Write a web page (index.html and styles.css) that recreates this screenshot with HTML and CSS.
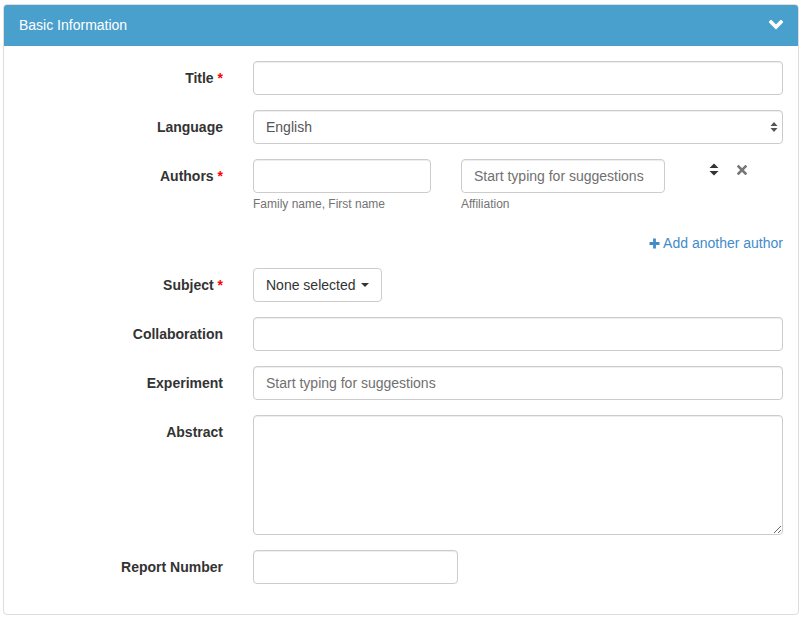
FILE: index.html
```html
<!DOCTYPE html>
<html lang="en">
<head>
<meta charset="utf-8">
<title>Basic Information</title>
<link rel="stylesheet" href="styles.css">
</head>
<body>
<div class="page">
  <div class="panel">
    <div class="panel-heading">
      <span class="panel-title">Basic Information</span>
      <svg class="chevron" width="14" height="10" viewBox="0 0 14 10"><polyline points="2,2 7,7 12,2" fill="none" stroke="#fff" stroke-width="3.6" stroke-linecap="square" stroke-linejoin="miter"/></svg>
    </div>
    <form class="panel-body">
      <div class="form-group">
        <label class="col-label">Title <span class="req">*</span></label>
        <div class="col-control"><input class="form-control" type="text"></div>
      </div>
      <div class="form-group">
        <label class="col-label">Language</label>
        <div class="col-control">
          <div class="select-wrap">
            <select class="form-control select"><option>English</option></select>
            <svg class="select-arrows" width="8" height="12" viewBox="0 0 8 12"><path d="M4 1 L7.5 5 H0.5 Z M4 11 L7.5 7 H0.5 Z" fill="#555"/></svg>
          </div>
        </div>
      </div>
      <div class="form-group">
        <label class="col-label">Authors <span class="req">*</span></label>
        <div class="col-control">
          <div class="author-row">
            <div class="author-name">
              <input class="form-control" type="text">
              <span class="help">Family name, First name</span>
            </div>
            <div class="author-aff">
              <input class="form-control" type="text" placeholder="Start typing for suggestions">
              <span class="help">Affiliation</span>
            </div>
            <div class="author-actions">
              <svg width="10" height="13" viewBox="0 0 10 13"><path d="M5 0.5 L9.5 5 H0.5 Z M5 12.5 L9.5 8 H0.5 Z" fill="#333"/></svg>
              <svg width="10" height="10" viewBox="0 0 10 10"><path d="M1.5 1.5 L8.5 8.5 M8.5 1.5 L1.5 8.5" stroke="#777" stroke-width="2.6" stroke-linecap="square"/></svg>
            </div>
          </div>
          <div class="add-author">
            <a class="link" href="#"><svg width="11" height="11" viewBox="0 0 11 11"><path d="M5.5 0.5 V10.5 M0.5 5.5 H10.5" stroke="#428bca" stroke-width="2.8"/></svg> Add another author</a>
          </div>
        </div>
      </div>
      <div class="form-group">
        <label class="col-label">Subject <span class="req">*</span></label>
        <div class="col-control">
          <button type="button" class="btn">None selected <span class="caret"></span></button>
        </div>
      </div>
      <div class="form-group">
        <label class="col-label">Collaboration</label>
        <div class="col-control"><input class="form-control" type="text"></div>
      </div>
      <div class="form-group">
        <label class="col-label">Experiment</label>
        <div class="col-control"><input class="form-control" type="text" placeholder="Start typing for suggestions"></div>
      </div>
      <div class="form-group">
        <label class="col-label">Abstract</label>
        <div class="col-control"><textarea class="form-control textarea"></textarea></div>
      </div>
      <div class="form-group">
        <label class="col-label">Report Number</label>
        <div class="col-control"><input class="form-control report" type="text"></div>
      </div>
    </form>
  </div>
</div>
</body>
</html>
```

FILE: styles.css
```css
* { box-sizing: border-box; }
html, body { margin: 0; padding: 0; background: #fff; }
body {
  font-family: "Liberation Sans", Arial, Helvetica, sans-serif;
  font-size: 14px;
  line-height: 20px;
  color: #333;
}
.page { padding: 4px 1px 4px 3px; }
.panel {
  width: 796px;
  border: 1px solid #dddddd;
  border-radius: 4px;
  background: #fff;
  overflow: hidden;
}
.panel-heading {
  display: flex;
  align-items: center;
  justify-content: space-between;
  height: 41px;
  padding: 10px 15px;
  background: #4aa0cd;
  color: #fff;
  border-bottom: 1px solid #4aa0cd;
}
.panel-title { font-size: 14px; line-height: 20px; }
.chevron { display: block; }
.panel-body { display: block; padding: 15px 0; margin: 0; }
.form-group { display: flex; margin-bottom: 15px; }
.col-label {
  flex: 0 0 234px;
  padding: 7px 15px 0;
  text-align: right;
  font-weight: bold;
  color: #333;
}
.req { color: #f00; font-weight: bold; }
.col-control { flex: 1; padding: 0 15px; min-width: 0; }
.form-control {
  display: block;
  width: 100%;
  height: 34px;
  padding: 6px 12px;
  font-family: inherit;
  font-size: 14px;
  line-height: 20px;
  color: #555;
  background: #fff;
  border: 1px solid #ccc;
  border-radius: 4px;
  box-shadow: inset 0 1px 1px rgba(0,0,0,0.075);
  margin: 0;
}
.form-control::placeholder { color: #707070; opacity: 1; }
.select-wrap { position: relative; }
.select { appearance: none; -webkit-appearance: none; padding-right: 24px; }
.select-arrows { position: absolute; right: 5px; top: 11px; }
.author-row { display: flex; align-items: flex-start; }
.author-name { width: 178px; }
.author-aff { width: 204px; margin-left: 30px; }
.help {
  display: block;
  margin-top: 3px;
  font-size: 12px;
  line-height: 17px;
  color: #737373;
}
.author-actions {
  display: flex;
  align-items: center;
  gap: 18px;
  margin-left: 44px;
  padding-top: 4px;
}
.author-actions svg { display: block; }
.add-author { margin-top: 20px; text-align: right; }
.link { color: #428bca; text-decoration: none; }
.link svg { display: inline-block; vertical-align: -1px; }
.btn {
  display: inline-flex;
  align-items: center;
  height: 34px;
  padding: 6px 12px;
  font-family: inherit;
  font-size: 14px;
  line-height: 20px;
  color: #333;
  background: #fff;
  border: 1px solid #ccc;
  border-radius: 4px;
  white-space: nowrap;
}
.caret {
  display: inline-block;
  width: 0;
  height: 0;
  margin-left: 5px;
  border-top: 4px solid #333;
  border-left: 4px solid transparent;
  border-right: 4px solid transparent;
}
.textarea { height: 120px; resize: vertical; }
.report { width: 205px; }
```
